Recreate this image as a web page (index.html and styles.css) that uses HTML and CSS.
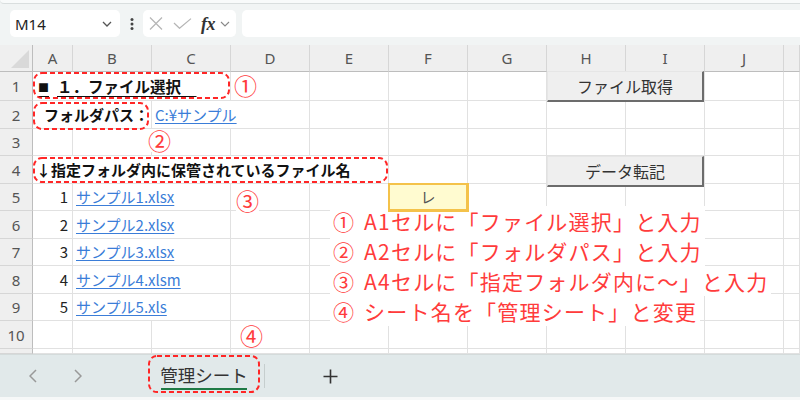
FILE: index.html
```html
<!DOCTYPE html>
<html lang="ja">
<head>
<meta charset="utf-8">
<title>Excel</title>
<link rel="stylesheet" href="styles.css">
</head>
<body>
<div class="app">
  <div class="top">
    <div class="namebox">
      <span>M14</span>
      <svg width="10" height="6" viewBox="0 0 10 6"><path d="M1 1 L5 5 L9 1" fill="none" stroke="#555" stroke-width="1.3"/></svg>
    </div>
    <div class="dots">
      <svg width="4" height="12" viewBox="0 0 4 12"><circle cx="2" cy="1.6" r="1.5" fill="#444"/><circle cx="2" cy="6" r="1.5" fill="#444"/><circle cx="2" cy="10.4" r="1.5" fill="#444"/></svg>
    </div>
    <div class="fxbox">
      <svg class="ic-x" width="14" height="13" viewBox="0 0 14 13"><path d="M1 0.5 L13 12.5 M13 0.5 L1 12.5" stroke="#b5b5b5" stroke-width="1.2" fill="none"/></svg>
      <svg class="ic-ok" width="19" height="11" viewBox="0 0 19 11"><path d="M1 5 L6.5 10.3 L18 0.6" stroke="#b5b5b5" stroke-width="1.2" fill="none"/></svg>
      <span class="fx">fx</span>
      <svg class="ic-dd" width="10" height="6" viewBox="0 0 10 6"><path d="M1 1 L5 5 L9 1" fill="none" stroke="#888" stroke-width="1.1"/></svg>
    </div>
    <div class="input"></div>
  </div>

  <div class="sheet">
    <!-- header -->
    <div class="corner"></div>
    <div class="c h">A</div><div class="c h">B</div><div class="c h">C</div><div class="c h">D</div><div class="c h">E</div><div class="c h">F</div><div class="c h">G</div><div class="c h">H</div><div class="c h">I</div><div class="c h">J</div><div class="c h"></div>

    <!-- row 1 -->
    <div class="c r">1</div>
    <div class="c s3 title t1"><span class="u"><span class="sq">■</span>１．ファイル選択　</span></div>
    <div class="c"></div><div class="c"></div><div class="c"></div><div class="c"></div>
    <div class="c s2 btncell"><div class="btn btn1">ファイル取得</div></div>
    <div class="c"></div><div class="c"></div>

    <!-- row 2 -->
    <div class="c r">2</div>
    <div class="c s2 title pad2">フォルダパス：</div>
    <div class="c s2 lkcell"><span class="lk">C:¥サンプル</span></div>
    <div class="c"></div><div class="c"></div><div class="c"></div><div class="c"></div><div class="c"></div><div class="c"></div><div class="c"></div>

    <!-- row 3 -->
    <div class="c r">3</div>
    <div class="c"></div><div class="c"></div><div class="c"></div><div class="c"></div><div class="c"></div><div class="c"></div><div class="c"></div><div class="c"></div><div class="c"></div><div class="c"></div><div class="c"></div>

    <!-- row 4 -->
    <div class="c r">4</div>
    <div class="c s5 title pad4">↓指定フォルダ内に保管されているファイル名</div>
    <div class="c"></div><div class="c"></div>
    <div class="c s2 btncell"><div class="btn btn2">データ転記</div></div>
    <div class="c"></div><div class="c"></div>

    <!-- row 5 -->
    <div class="c r">5</div>
    <div class="c num">1</div>
    <div class="c s2 lkcell"><span class="lk">サンプル1.xlsx</span></div>
    <div class="c"></div><div class="c"></div>
    <div class="c sel">レ</div>
    <div class="c"></div><div class="c"></div><div class="c"></div><div class="c"></div><div class="c"></div>

    <!-- row 6 -->
    <div class="c r">6</div>
    <div class="c num">2</div>
    <div class="c s2 lkcell"><span class="lk">サンプル2.xlsx</span></div>
    <div class="c"></div><div class="c"></div><div class="c"></div><div class="c"></div><div class="c"></div><div class="c"></div><div class="c"></div><div class="c"></div>

    <!-- row 7 -->
    <div class="c r">7</div>
    <div class="c num">3</div>
    <div class="c s2 lkcell"><span class="lk">サンプル3.xlsx</span></div>
    <div class="c"></div><div class="c"></div><div class="c"></div><div class="c"></div><div class="c"></div><div class="c"></div><div class="c"></div><div class="c"></div>

    <!-- row 8 -->
    <div class="c r">8</div>
    <div class="c num">4</div>
    <div class="c s2 lkcell"><span class="lk">サンプル4.xlsm</span></div>
    <div class="c"></div><div class="c"></div><div class="c"></div><div class="c"></div><div class="c"></div><div class="c"></div><div class="c"></div><div class="c"></div>

    <!-- row 9 -->
    <div class="c r">9</div>
    <div class="c num">5</div>
    <div class="c s2 lkcell"><span class="lk">サンプル5.xls</span></div>
    <div class="c"></div><div class="c"></div><div class="c"></div><div class="c"></div><div class="c"></div><div class="c"></div><div class="c"></div><div class="c"></div>

    <!-- row 10 -->
    <div class="c r">10</div>
    <div class="c"></div><div class="c"></div><div class="c"></div><div class="c"></div><div class="c"></div><div class="c"></div><div class="c"></div><div class="c"></div><div class="c"></div><div class="c"></div><div class="c"></div>

    <!-- row 11 (partial) -->
    <div class="c r"></div>
    <div class="c"></div><div class="c"></div><div class="c"></div><div class="c"></div><div class="c"></div><div class="c"></div><div class="c"></div><div class="c"></div><div class="c"></div><div class="c"></div><div class="c"></div>
  </div>

  <div class="tabs">
    <svg class="nav1" width="8" height="14" viewBox="0 0 8 14"><path d="M7 1 L1 7 L7 13" fill="none" stroke="#999" stroke-width="1.5"/></svg>
    <svg class="nav2" width="8" height="14" viewBox="0 0 8 14"><path d="M1 1 L7 7 L1 13" fill="none" stroke="#999" stroke-width="1.5"/></svg>
    <div class="tab">管理シート</div>
    <div class="sep"></div>
    <svg class="plus" width="15" height="15" viewBox="0 0 15 15"><path d="M7.5 0.5 V14.5 M0.5 7.5 H14.5" stroke="#333" stroke-width="1.6"/></svg>
  </div>
  <div class="status"></div>

  <span class="mark m1">①</span>
  <span class="mark m2">②</span>
  <span class="mark m3">③</span>
  <span class="mark m4">④</span>

  <div class="note">
    <span class="line">① A1セルに「ファイル選択」と入力</span>
    <span class="line">② A2セルに「フォルダパス」と入力</span>
    <span class="line">③ A4セルに「指定フォルダ内に～」と入力</span>
    <span class="line">④ シート名を「管理シート」と変更</span>
  </div>

  <svg class="dashes" width="800" height="400" viewBox="0 0 800 400">
    <g fill="none" stroke="#ff2626" stroke-width="2" stroke-dasharray="5 3">
      <rect x="34" y="73" width="195" height="25" rx="8"/>
      <rect x="34" y="103" width="114" height="26" rx="8"/>
      <rect x="34" y="158" width="353" height="24" rx="8"/>
      <rect x="149" y="356" width="110" height="36" rx="8"/>
    </g>
  </svg>
</div>
</body>
</html>
```

FILE: styles.css
```css
* { box-sizing: border-box; }
html, body { margin: 0; padding: 0; }
body {
  width: 800px;
  height: 400px;
  overflow: hidden;
  background: #fff;
  font-family: "Noto Sans CJK JP", "Noto Sans", sans-serif;
  text-spacing-trim: space-all;
}
.app {
  position: relative;
  width: 800px;
  height: 400px;
  display: flex;
  flex-direction: column;
}

/* formula bar */
.top {
  position: relative;
  flex: none;
  height: 45px;
  background: #f1f4f4;
  display: flex;
  align-items: flex-start;
  padding: 10px 0 0 10px;
}
.top::before {
  content: "";
  position: absolute;
  left: 0; right: 0; top: 0;
  height: 3px;
  background: #f8fafa;
  border-bottom: 1px solid #d9dede;
  border-bottom-left-radius: 6px;
}
.namebox {
  width: 110px;
  height: 27px;
  background: #fff;
  border-radius: 5px;
  display: flex;
  align-items: center;
  justify-content: space-between;
  padding: 0 8px 0 5px;
  font: 15px "Noto Sans", sans-serif;
  color: #222;
}
.dots {
  width: 23px;
  height: 27px;
  display: flex;
  align-items: center;
  justify-content: center;
}
.fxbox {
  width: 93px;
  height: 27px;
  background: #fff;
  border-radius: 5px;
  display: flex;
  align-items: center;
  padding-left: 6px;
}
.ic-ok { margin-left: 10px; }
.fx {
  margin-left: 9px;
  font: italic 600 18px "Liberation Serif", serif;
  color: #333;
  line-height: 18px;
  letter-spacing: -0.5px;
}
.ic-dd { margin-left: 5px; }
.input {
  flex: 1;
  height: 27px;
  margin-left: 6px;
  background: #fff;
  border-radius: 5px 0 0 5px;
}

/* sheet grid */
.sheet {
  flex: none;
  height: 309px;
  display: grid;
  grid-template-columns: 33px 40px repeat(9, 79px) 1fr;
  grid-template-rows: 27px 29px 28px 27px 28px 27px 28px 27px 28px 27px 28px 1fr;
  overflow: hidden;
  background: #fff;
}
.c {
  min-width: 0;
  display: flex;
  align-items: center;
  white-space: nowrap;
  border-right: 1px solid #e1e1e1;
  border-bottom: 1px solid #e1e1e1;
  font-size: 15px;
  line-height: 18px;
  color: #222;
}
.corner {
  position: relative;
  background: #efefef;
  border-right: 1px solid #bdbdbd;
  border-bottom: 1px solid #bdbdbd;
}
.corner::after {
  content: "";
  position: absolute;
  left: 11px;
  top: 5px;
  width: 18px;
  height: 18px;
  background: #d9d9d9;
  clip-path: polygon(100% 0, 100% 100%, 0 100%);
}
.h {
  justify-content: center;
  background: #efefef;
  border-right-color: #d6d6d6;
  border-bottom-color: #bdbdbd;
  font-family: "Noto Sans", sans-serif;
  color: #555;
}
.r {
  justify-content: center;
  background: #efefef;
  border-right-color: #bdbdbd;
  border-bottom-color: #d6d6d6;
  font-family: "Noto Sans", sans-serif;
  color: #555;
}
.s2 { grid-column: span 2; }
.s3 { grid-column: span 3; }
.s5 { grid-column: span 5; }

.title {
  font-weight: 700;
  color: #111;
  padding-left: 5px;
  white-space: pre;
}
.t1 { font-size: 15.5px; }
.title .u { text-decoration: underline; text-underline-offset: 3px; }
.sq { font-size: 11px; vertical-align: 1px; margin-right: 8px; }
.pad2 { padding-left: 11px; }
.pad4 { padding-left: 3px; }
.lkcell { padding-left: 3px; }
.lk {
  color: #3b7dd8;
  text-decoration: underline;
  text-underline-offset: 2px;
}
.num { justify-content: flex-end; padding-right: 4px; }
.sel {
  position: relative;
  z-index: 1;
  justify-content: center;
  background: #fffbd0;
  border-color: #f4c24a;
  box-shadow: 0 0 0 1px #f4c24a, inset 0 0 0 1px #f4c24a;
  color: #555;
}
.btncell { align-items: flex-start; }
.btn {
  position: relative;
  z-index: 2;
  width: calc(100% + 1px);
  height: 31px;
  display: flex;
  align-items: center;
  justify-content: center;
  background: #efefef;
  border-top: 1px solid #e6e6e6;
  border-left: 1px solid #e6e6e6;
  border-right: 2px solid #6c6c6c;
  border-bottom: 2px solid #6c6c6c;
  font-size: 16px;
  color: #333;
}
.btn1 { margin-top: -1px; }

/* sheet tabs */
.tabs {
  flex: none;
  height: 43px;
  background: #e1e9ea;
  border-top: 1px solid #d4dbdb;
  display: flex;
  align-items: center;
}
.nav1 { margin-left: 29px; }
.nav2 { margin-left: 37px; }
.tab {
  position: relative;
  margin-left: 66px;
  width: 112px;
  height: 42px;
  display: flex;
  align-items: center;
  justify-content: center;
  padding-bottom: 4px;
  font-size: 17.5px;
  color: #333;
}
.tab::after {
  content: "";
  position: absolute;
  left: 13px;
  right: 13px;
  top: 33px;
  height: 2px;
  background: #1f7a45;
}
.sep {
  margin-left: 4px;
  width: 1px;
  height: 24px;
  background: #c6cece;
}
.plus { margin-left: 58px; }
.status {
  flex: none;
  height: 3px;
  background: #f6f8f8;
}

/* annotations */
.mark {
  position: absolute;
  width: 23px;
  height: 23px;
  font-size: 23px;
  line-height: 23px;
  text-align: center;
  color: #ff3b3b;
  background: #fff;
}
.m1 { left: 234px; top: 74px; }
.m2 { left: 148px; top: 129px; }
.m3 { left: 236px; top: 189px; }
.m4 { left: 240px; top: 324px; }

.note {
  position: absolute;
  left: 330px;
  top: 206px;
}
.line {
  display: block;
  width: fit-content;
  padding: 0 3px;
  background: #fff;
  font-size: 21px;
  line-height: 30px;
  color: #ff3b3b;
  letter-spacing: 1.2px;
  word-spacing: 3px;
  white-space: nowrap;
}
.dashes {
  position: absolute;
  left: 0;
  top: 0;
  pointer-events: none;
}
```
